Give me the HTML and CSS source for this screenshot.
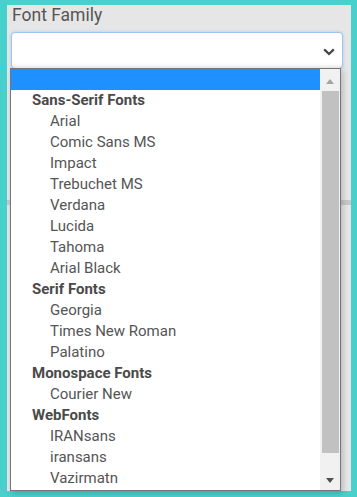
FILE: index.html
```html
<!DOCTYPE html>
<html lang="en">
<head>
  <meta charset="UTF-8" />
  <meta name="viewport" content="width=device-width, initial-scale=1.0" />
  <title>Font Family</title>
  <link rel="stylesheet" href="styles.css">
</head>
<body>
  <div class="panel">
    <label class="field-label">Font Family</label>

    <div class="select-wrap">
      <div class="select-box">
        <svg class="chevron" width="12" height="8" viewBox="0 0 12 8">
          <path d="M1.2 1.4 L6 6 L10.8 1.4" fill="none" stroke="#444" stroke-width="2.2" />
        </svg>
      </div>

      <!-- open list of the select -->
      <div class="dropdown">
        <div class="options">
          <div class="opt selected"></div>
          <div class="group">Sans-Serif Fonts</div>
          <div class="opt">Arial</div>
          <div class="opt">Comic Sans MS</div>
          <div class="opt">Impact</div>
          <div class="opt">Trebuchet MS</div>
          <div class="opt">Verdana</div>
          <div class="opt">Lucida</div>
          <div class="opt">Tahoma</div>
          <div class="opt">Arial Black</div>
          <div class="group">Serif Fonts</div>
          <div class="opt">Georgia</div>
          <div class="opt">Times New Roman</div>
          <div class="opt">Palatino</div>
          <div class="group">Monospace Fonts</div>
          <div class="opt">Courier New</div>
          <div class="group">WebFonts</div>
          <div class="opt">IRANsans</div>
          <div class="opt">iransans</div>
          <div class="opt">Vazirmatn</div>
        </div>
        <div class="scrollbar">
          <div class="sb-btn up"><span class="arrow-up"></span></div>
          <div class="thumb"></div>
          <div class="sb-btn down"><span class="arrow-down"></span></div>
        </div>
      </div>
    </div>

    <div class="rule"></div>
  </div>
</body>
</html>
```

FILE: styles.css
```css
html, body {
  margin: 0;
  height: 100%;
}

body {
  background-color: #48d1cc;
  padding: 5px 6px 6px 7px;
  box-sizing: border-box;
  height: 497px;
  overflow: hidden;
  font-family: Roboto, "Liberation Sans", Arial, sans-serif;
  color: #555;
}

.panel {
  background-color: #e6e6e6;
  height: 100%;
  padding: 0 8px 0 4px;
  box-sizing: border-box;
}

.field-label {
  display: block;
  font-size: 17.5px;
  line-height: 20px;
  padding-left: 1px;
  color: #555;
}

.select-wrap {
  position: relative;
  margin-top: 7px;
}

.select-box {
  height: 37px;
  background-color: #fff;
  border: 1px solid #9cc4ee;
  border-radius: 4px;
  box-sizing: border-box;
  box-shadow: 0 0 3px rgba(102, 164, 232, 0.45), inset 0 -6px 6px -6px rgba(0, 0, 0, 0.12);
  display: flex;
  align-items: center;
  justify-content: flex-end;
  padding-right: 7px;
}

.chevron {
  margin-top: 2px;
}

.dropdown {
  position: absolute;
  top: calc(100% - 1px);
  left: -1px;
  width: 331px;
  height: 423px;
  box-sizing: border-box;
  background-color: #fff;
  border: 1px solid #767676;
  box-shadow: 2px 2px 6px rgba(0, 0, 0, 0.2);
  display: flex;
  overflow: hidden;
}

.options {
  flex: 1;
  overflow: hidden;
  font-size: 15px;
}

.opt, .group {
  height: 21px;
  line-height: 21px;
  white-space: nowrap;
}

.group {
  font-weight: bold;
  padding-left: 21px;
  color: #4a4a4a;
}

.opt {
  padding-left: 39px;
}

.opt.selected {
  height: 21px;
  background-color: #1e90ff;
}

.scrollbar {
  width: 20px;
  background-color: #f1f1f1;
  display: flex;
  flex-direction: column;
}

.sb-btn {
  height: 21px;
  display: flex;
  justify-content: center;
}

.sb-btn.up {
  align-items: flex-end;
  height: 15px;
}

.sb-btn.down {
  margin-top: auto;
  height: 20px;
  align-items: flex-start;
  padding-top: 8px;
  box-sizing: border-box;
}

.arrow-up {
  width: 0;
  height: 0;
  border-left: 4px solid transparent;
  border-right: 4px solid transparent;
  border-bottom: 5px solid #a3a3a3;
}

.arrow-down {
  width: 0;
  height: 0;
  border-left: 4px solid transparent;
  border-right: 4px solid transparent;
  border-top: 5px solid #505050;
}

.thumb {
  height: 362px;
  margin: 7px 1px 0 2px;
  background-color: #c1c1c1;
}

.rule {
  height: 5px;
  margin: 131px -8px 0 -4px;
  background-color: #c8c8c8;
}
```
